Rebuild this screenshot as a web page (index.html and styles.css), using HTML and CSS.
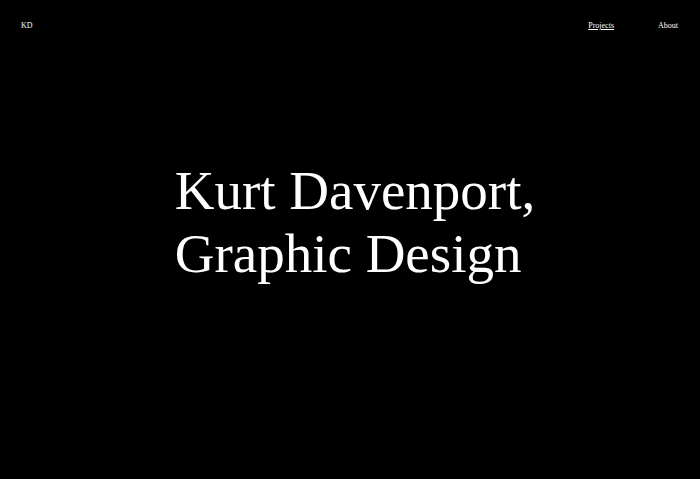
FILE: index.html
```html
<!DOCTYPE html>
<html>
<head>
<meta charset="utf-8">
<link rel="stylesheet" href="styles.css">
</head>
<body>
<div class="page">
  <header class="nav">
    <a class="logo" href="#">KD</a>
    <nav class="links">
      <a class="link current" href="#">Projects</a>
      <a class="link" href="#">About</a>
    </nav>
  </header>
  <main class="hero">
    <h1 class="title">Kurt Davenport,<br>Graphic Design</h1>
  </main>
</div>
</body>
</html>
```
FILE: styles.css
```css
html, body {
  margin: 0;
  padding: 0;
  background: #000;
  color: #fff;
  font-family: "Liberation Serif", "Times New Roman", serif;
}
.page {
  height: 479px;
  display: flex;
  flex-direction: column;
}
.nav {
  display: flex;
  justify-content: space-between;
  align-items: center;
  padding: 20px 22px 0 21px;
  font-size: 8px;
  line-height: 12px;
}
.nav a {
  color: #fff;
  text-decoration: none;
}
.links {
  display: flex;
  gap: 44px;
}
.link.current {
  text-decoration: underline;
}
.hero {
  flex: 1;
  display: flex;
  align-items: center;
  justify-content: center;
  padding: 0 0 67px 10px;
}
.title {
  margin: 0;
  font-weight: normal;
  font-size: 55px;
  line-height: 63px;
}
```
